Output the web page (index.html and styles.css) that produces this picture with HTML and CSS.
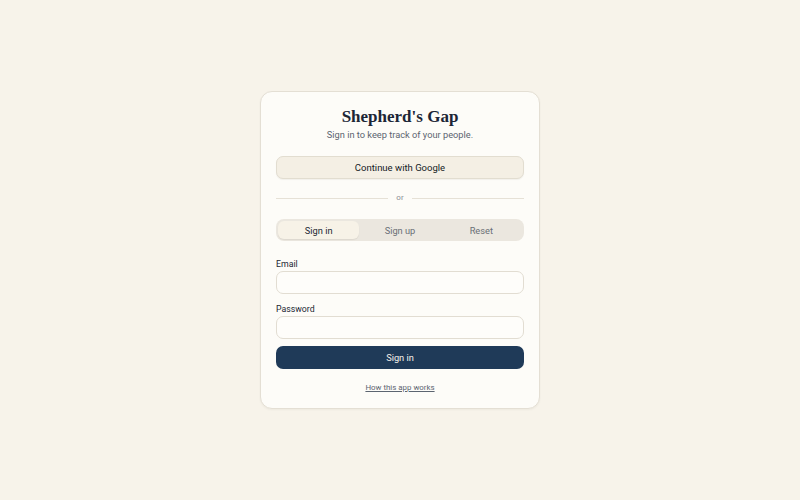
FILE: index.html
```html
<!DOCTYPE html>
<html lang="en">
<head>
<meta charset="utf-8">
<title>Shepherd's Gap</title>
<link rel="stylesheet" href="styles.css">
</head>
<body>
<main class="page">
  <section class="card">
    <h1 class="title">Shepherd's Gap</h1>
    <p class="subtitle">Sign in to keep track of your people.</p>
    <button class="btn-google" type="button">Continue with Google</button>
    <div class="divider"><span class="line"></span><span class="or">or</span><span class="line"></span></div>
    <div class="tabs">
      <button class="tab active" type="button">Sign in</button>
      <button class="tab" type="button">Sign up</button>
      <button class="tab" type="button">Reset</button>
    </div>
    <form class="form">
      <label class="field">
        <span class="label">Email</span>
        <input class="input" type="email">
      </label>
      <label class="field">
        <span class="label">Password</span>
        <input class="input" type="password">
      </label>
      <button class="btn-primary" type="button">Sign in</button>
    </form>
    <a class="help" href="#">How this app works</a>
  </section>
</main>
</body>
</html>
```
FILE: styles.css
```css
* { box-sizing: border-box; }
html, body { margin: 0; padding: 0; }
body {
  background: #f7f3ea;
  font-family: Roboto, "Noto Sans", sans-serif;
  color: #1c2733;
}
.page {
  height: 500px;
  display: flex;
  align-items: center;
  justify-content: center;
}
.card {
  width: 280px;
  background: #fdfcf8;
  border: 1px solid #e4dfd4;
  border-radius: 12px;
  padding: 16px 15px 14px;
  display: flex;
  flex-direction: column;
  box-shadow: 0 1px 2px rgba(60, 50, 30, 0.05);
}
.title {
  margin: 0;
  font-family: "Liberation Serif", "DejaVu Serif", serif;
  font-weight: 700;
  font-size: 17px;
  line-height: 18px;
  text-align: center;
  color: #1c2636;
}
.subtitle {
  margin: 2px 0 0;
  font-size: 9.25px;
  line-height: 13px;
  text-align: center;
  color: #5c6470;
}
.btn-google {
  margin-top: 15px;
  height: 23px;
  border: 1px solid #e2ddd0;
  background: #f4efe4;
  border-radius: 7px;
  font-family: inherit;
  font-size: 9.5px;
  font-weight: 400;
  color: #141c26;
  box-shadow: 0 1px 1px rgba(60, 50, 30, 0.06);
}
.divider {
  margin-top: 13px;
  display: flex;
  align-items: center;
  gap: 8px;
  height: 12px;
}
.line { flex: 1; height: 1px; background: #e6e1d6; }
.or { font-size: 8px; color: #8a8f96; line-height: 12px; }
.tabs {
  margin-top: 15px;
  height: 22px;
  background: #ebe7df;
  border-radius: 8px;
  padding: 2px;
  display: grid;
  grid-template-columns: 1fr 1fr 1fr;
}
.tab {
  border: 0;
  background: transparent;
  border-radius: 6px;
  font-family: inherit;
  font-size: 9.25px;
  color: #6a6f76;
  padding: 0;
}
.tab.active {
  background: #f7f2e7;
  color: #1c2733;
  box-shadow: 0 1px 1px rgba(60, 50, 30, 0.08);
}
.form {
  margin-top: 16px;
  display: flex;
  flex-direction: column;
}
.field { display: flex; flex-direction: column; margin-bottom: 8px; }
.label {
  font-size: 8.75px;
  line-height: 14px;
  font-weight: 400;
  color: #1c2733;
}
.input {
  height: 23px;
  border: 1px solid #e2ddd2;
  background: #fefdfa;
  border-radius: 7px;
  padding: 0 8px;
  font-family: inherit;
  font-size: 9px;
}
.btn-primary {
  margin-top: -1px;
  height: 23px;
  border: 0;
  border-radius: 7px;
  background: #1f3a58;
  color: #f4f1ea;
  font-family: inherit;
  font-size: 9.25px;
  font-weight: 400;
}
.help {
  margin-top: 13px;
  align-self: center;
  font-size: 7.9px;
  line-height: 12px;
  color: #5c6470;
  text-decoration: underline;
}
```
